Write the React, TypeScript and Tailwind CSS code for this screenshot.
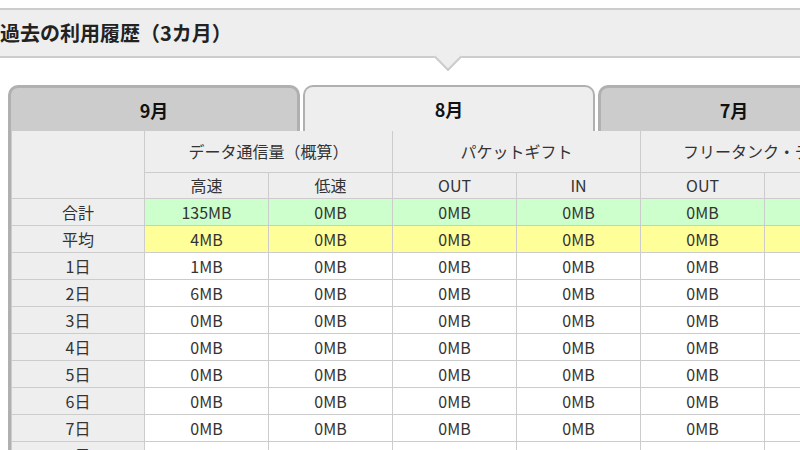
const days = [
  ['1日', '1MB'],
  ['2日', '6MB'],
  ['3日', '0MB'],
  ['4日', '0MB'],
  ['5日', '0MB'],
  ['6日', '0MB'],
  ['7日', '0MB'],
  ['8日', '31MB'],
];

const font = { fontFamily: '"Noto Sans CJK JP", "Noto Sans", sans-serif' };

const Row = ({ label, first, bg }: { label: string; first: string; bg: string }) => (
  <tr className={`h-[27px] ${bg}`}>
    <td className="bg-[#eeeeee] border border-[#cccccc] text-center">{label}</td>
    <td className="border border-[#cccccc] text-center">{first}</td>
    {[0, 1, 2, 3, 4].map((i) => (
      <td key={i} className="border border-[#cccccc] text-center">0MB</td>
    ))}
  </tr>
);

export default function App() {
  return (
    <div className="w-[800px] h-[450px] overflow-hidden bg-white text-[#333] text-[16px] leading-none" style={font}>
      <div className="mt-[8px] h-[50px] bg-[#eeeeee] border-y-2 border-[#cccccc] flex items-center">
        <h2 className="text-[20px] font-bold text-[#222]">過去の利用履歴（3カ月）</h2>
      </div>
      <div className="relative h-[27px]">
        <div className="absolute left-[438px] -top-[11px] w-[20px] h-[20px] rotate-45 bg-[#eeeeee] border-r-2 border-b-2 border-[#cccccc]" />
      </div>
      <div className="pl-[8px] flex gap-[3px] h-[46px]">
        <div className="w-[292px] shrink-0 rounded-t-[10px] border-[3px] border-b-0 border-[#b0b0b0] bg-[#cccccc] flex items-center justify-center text-[18px] font-bold text-[#111]">9月</div>
        <div className="w-[292px] shrink-0 rounded-t-[10px] border-[2px] border-b-0 border-[#b0b0b0] bg-[#eeeeee] flex items-center justify-center text-[18px] font-bold text-[#111]">8月</div>
        <div className="w-[292px] shrink-0 rounded-t-[10px] border-[3px] border-b-0 border-[#b0b0b0] bg-[#cccccc] flex items-center justify-center text-[18px] font-bold text-[#111] pr-[20px]">7月</div>
      </div>
      <div className="ml-[8px] border-l-[3px] border-[#b0b0b0]">
        <table className="border-collapse table-fixed w-[877px]">
          <colgroup>
            <col className="w-[133px]" />
            {[0, 1, 2, 3, 4, 5].map((i) => (
              <col key={i} className="w-[124px]" />
            ))}
          </colgroup>
          <thead className="bg-[#eeeeee]">
            <tr className="h-[41px]">
              <td rowSpan={2} className="border border-[#cccccc] border-t-0" />
              <td colSpan={2} className="border border-[#cccccc] border-t-0 text-center">データ通信量（概算）</td>
              <td colSpan={2} className="border border-[#cccccc] border-t-0 text-center">パケットギフト</td>
              <td colSpan={2} className="border border-[#cccccc] border-t-0 text-left pl-[42px] whitespace-nowrap overflow-hidden">フリータンク・データ</td>
            </tr>
            <tr className="h-[26px]">
              {['高速', '低速', 'OUT', 'IN', 'OUT', 'IN'].map((t, i) => (
                <td key={i} className="border border-[#cccccc] text-center">{t}</td>
              ))}
            </tr>
          </thead>
          <tbody>
            <Row label="合計" first="135MB" bg="bg-[#ccffcc]" />
            <Row label="平均" first="4MB" bg="bg-[#ffff99]" />
            {days.map(([d, v]) => (
              <Row key={d} label={d} first={v} bg="bg-white" />
            ))}
          </tbody>
        </table>
      </div>
    </div>
  );
}
